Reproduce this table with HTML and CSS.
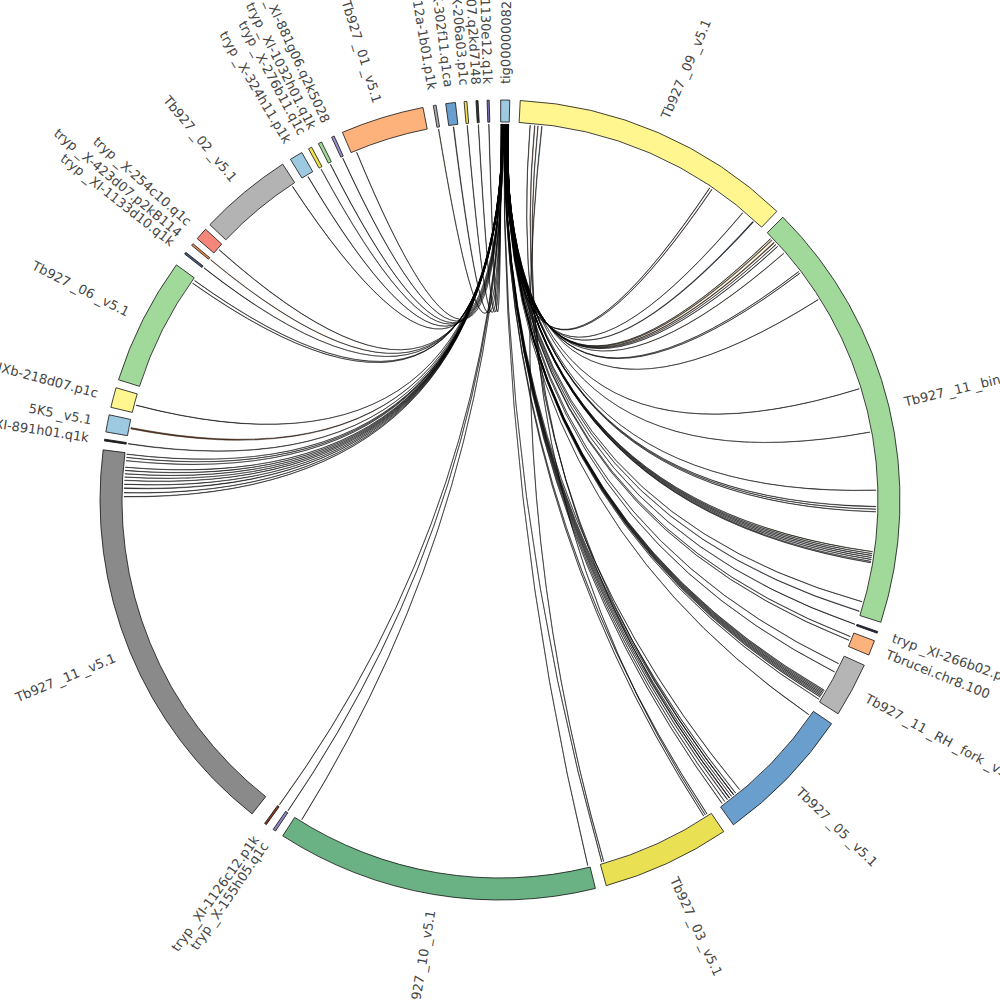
FILE: index.html
```html
<!DOCTYPE html>
<html lang="en">
<head>
<meta charset="utf-8">
<title>Contig link diagram</title>
<link rel="stylesheet" href="styles.css">
</head>
<body>
<svg id="chart" class="chart" xmlns="http://www.w3.org/2000/svg" width="1000" height="1000" viewBox="0 0 1000 1000">
  <g id="links"></g>
  <g id="segments"></g>
  <g id="labels"></g>
</svg>
<script src="script.js"></script>
</body>
</html>
```

FILE: styles.css
```css
html, body {
  margin: 0;
  padding: 0;
  background: #ffffff;
}
.chart {
  display: block;
  width: 1000px;
  height: 1000px;
}
.seg {
  stroke: #111111;
  stroke-width: 0.8;
  stroke-linejoin: miter;
}
.link {
  stroke: #000000;
  stroke-width: 0.45;
  stroke-linejoin: round;
}
.label {
  font-family: "DejaVu Sans", "Liberation Sans", sans-serif;
  font-size: 13px;
  fill: #454545;
}
```

FILE: script.js
```js
(function () {
  var NS = "http://www.w3.org/2000/svg";
  var CX = 500, CY = 500, RO = 400, RI = 378, RC = 376, RL = 416;

  var segments = [
    ["tig00000082", 0.1, 1.4, "#9ecae1"],
    ["Tb927_09_v5.1", 2.9, 43.8, "#fff68f"],
    ["Tb927_11_bin_v5.1", 45.0, 107.8, "#a1d99b"],
    ["tryp_XI-266b02.p1k", 109.2, 109.45, "#2a2a4a"],
    ["Tbrucei.chr8.100", 110.6, 112.8, "#fdb27b"],
    ["Tb927_11_RH_fork_v5.1", 114.4, 122.3, "#b5b5b5"],
    ["Tb927_05_v5.1", 124.0, 144.3, "#6a9fcd"],
    ["Tb927_03_v5.1", 146.0, 164.6, "#e9e053"],
    ["Tb927_10_v5.1", 166.2, 212.9, "#6ab283"],
    ["tryp_X-155h05.q1c", 214.15, 214.55, "#8b84c4"],
    ["tryp_XI-1126c12.p1k", 215.75, 216.05, "#8a3a22"],
    ["Tb927_11_v5.1", 218.3, 277.2, "#8a8a8a"],
    ["tryp_XI-891h01.q1k", 278.5, 278.75, "#222222"],
    ["5K5_v5.1", 279.8, 282.3, "#9ecae1"],
    ["tryp_IXb-218d07.p1c", 283.4, 286.3, "#fff68f"],
    ["Tb927_06_v5.1", 287.5, 306.0, "#a1d99b"],
    ["tryp_XI-1133d10.q1k", 307.95, 308.25, "#4a5a7a"],
    ["tryp_X-423d07.p2kB114", 309.55, 309.85, "#e58a4a"],
    ["tryp_X-254c10.q1c", 310.8, 312.6, "#f4877a"],
    ["Tb927_02_v5.1", 313.5, 327.1, "#b3b3b3"],
    ["tryp_X-324h11.p1k", 328.4, 330.3, "#9ecae1"],
    ["tryp_X-276b11.q1c", 331.4, 331.9, "#f0e050"],
    ["tryp_XI-1032h01.q1k", 333.0, 333.5, "#a1d99b"],
    ["tryp_XI-881g06.q2k5028", 335.1, 335.5, "#9a90d0"],
    ["Tb927_01_v5.1", 336.8, 348.9, "#fdb27b"],
    ["tryp_XI-1012a-1b01.p1k", 350.4, 350.8, "#aaaaaa"],
    ["tryp_X-302f11.q1ca", 352.2, 353.6, "#6a9fcd"],
    ["tryp_X-206a03.p1c", 354.85, 355.25, "#f0e050"],
    ["tryp_X-421d07.q2kd7148", 356.55, 356.85, "#333333"],
    ["tryp_XI-1130e12.q1k", 358.15, 358.45, "#7b6fb0"]
  ];

  // links from the hub contig (tig00000082): [target angle, target width, fill]
  var hubLinks = [
    [33.9, 0.05, "#333333"], [34.3, 0.06, "#8b4a2b"], [40.2, 0.05, "#555555"], [42.3, 0.15, "#2b3a4a"],
    [46.0, 0.05, "#333333"], [46.3, 0.12, "#b8860b"], [46.8, 0.12, "#8b4513"], [47.2, 0.05, "#333333"],
    [47.6, 0.06, "#2e2e2e"], [49.0, 0.05, "#6b5b2a"],
    [52.6, 0.04, "#333333"], [52.9, 0.04, "#333333"], [57.8, 0.04, "#333333"], [72.8, 0.04, "#333333"],
    [79.6, 0.04, "#333333"],
    [88.5, 0.04, "#333333"], [91.0, 0.06, "#3a4a3a"], [91.4, 0.04, "#333333"], [91.8, 0.04, "#333333"],
    [97.9, 0.06, "#6b5b2a"], [98.2, 0.04, "#333333"], [98.5, 0.08, "#333333"], [98.8, 0.04, "#333333"],
    [99.1, 0.06, "#4a4a6a"], [99.4, 0.04, "#333333"], [99.6, 0.04, "#333333"],
    [105.7, 0.04, "#333333"], [107.2, 0.08, "#5b5b7b"],
    [109.3, 0.05, "#333333"], [111.3, 0.04, "#333333"], [111.9, 0.04, "#333333"],
    [115.8, 0.04, "#333333"], [117.2, 0.04, "#333333"], [120.4, 0.05, "#333333"], [120.6, 0.04, "#333333"],
    [120.8, 0.05, "#333333"], [121.0, 0.04, "#333333"], [121.2, 0.05, "#333333"], [121.4, 0.04, "#333333"],
    [121.6, 0.05, "#333333"], [122.0, 0.04, "#333333"],
    [124.8, 0.04, "#333333"], [140.4, 0.04, "#333333"], [141.2, 0.05, "#555555"], [141.6, 0.04, "#333333"],
    [142.0, 0.04, "#333333"], [142.4, 0.04, "#333333"], [142.8, 0.08, "#5b5080"], [143.3, 0.04, "#333333"],
    [143.8, 0.04, "#333333"],
    [146.6, 0.05, "#4a4a2a"], [147.2, 0.04, "#333333"], [164.3, 0.04, "#333333"], [166.5, 0.04, "#2a4a2a"],
    [211.8, 0.05, "#7a3a1a"], [214.3, 0.06, "#5b5080"], [215.9, 0.05, "#7a3a1a"],
    [270.5, 0.06, "#333333"], [271.1, 0.05, "#333333"], [271.8, 0.1, "#333333"], [272.4, 0.04, "#333333"],
    [273.0, 0.05, "#333333"], [273.5, 0.04, "#333333"], [274.0, 0.04, "#333333"],
    [274.5, 0.05, "#333333"], [275.0, 0.04, "#333333"], [276.0, 0.04, "#333333"], [276.5, 0.04, "#333333"],
    [277.0, 0.04, "#333333"],
    [278.6, 0.08, "#333333"], [281.0, 0.2, "#7a4a2a"], [284.6, 0.06, "#333333"],
    [305.2, 0.05, "#333333"], [305.7, 0.05, "#333333"], [308.1, 0.06, "#333333"], [309.7, 0.06, "#b5651d"],
    [311.7, 0.06, "#333333"],
    [326.5, 0.05, "#333333"], [329.3, 0.06, "#333333"], [331.6, 0.06, "#6b6b2a"], [333.2, 0.06, "#333333"],
    [335.3, 0.06, "#333333"],
    [337.6, 0.05, "#555555"], [350.6, 0.06, "#6b6b2a"], [352.9, 0.1, "#4a5a6a"], [355.0, 0.06, "#333333"],
    [356.7, 0.06, "#333333"], [358.3, 0.06, "#333333"]
  ];

  // other links: [source angle, source width, target angle, target width, fill]
  var otherLinks = [
    [4.6, 0.05, 141.6, 0.04, "#333333"],
    [5.3, 0.07, 142.4, 0.05, "#8b4a2b"],
    [5.8, 0.05, 146.9, 0.04, "#333333"],
    [6.4, 0.08, 164.0, 0.05, "#4a5a6a"]
  ];

  function pt(a, r) {
    var t = a * Math.PI / 180;
    return [CX + r * Math.sin(t), CY - r * Math.cos(t)];
  }
  function s(p) { return p[0].toFixed(2) + "," + p[1].toFixed(2); }

  function segPath(a1, a2) {
    var large = (a2 - a1) > 180 ? 1 : 0;
    return "M" + s(pt(a1, RO)) +
      "A" + RO + "," + RO + " 0 " + large + " 1 " + s(pt(a2, RO)) +
      "L" + s(pt(a2, RI)) +
      "A" + RI + "," + RI + " 0 " + large + " 0 " + s(pt(a1, RI)) + "Z";
  }

  function ribbon(s0, s1, t0, t1) {
    return "M" + s(pt(s0, RC)) +
      "A" + RC + "," + RC + " 0 0 1 " + s(pt(s1, RC)) +
      "Q" + CX + "," + CY + " " + s(pt(t0, RC)) +
      "A" + RC + "," + RC + " 0 0 1 " + s(pt(t1, RC)) +
      "Q" + CX + "," + CY + " " + s(pt(s0, RC)) + "Z";
  }

  function el(name, attrs, parent) {
    var e = document.createElementNS(NS, name);
    for (var k in attrs) e.setAttribute(k, attrs[k]);
    parent.appendChild(e);
    return e;
  }

  var gLinks = document.getElementById("links");
  var gSegs = document.getElementById("segments");
  var gLabels = document.getElementById("labels");

  var sorted = hubLinks.slice().sort(function (a, b) { return a[0] - b[0]; });
  var hubStart = 0.18, hubEnd = 1.32, n = sorted.length;
  sorted.forEach(function (l, i) {
    var h = hubEnd - (hubEnd - hubStart) * i / (n - 1);
    var hw = 0.008;
    el("path", {
      "class": "link",
      d: ribbon(h - hw, h, l[0] - l[1] / 2, l[0] + l[1] / 2),
      fill: l[2]
    }, gLinks);
  });
  otherLinks.forEach(function (l) {
    el("path", {
      "class": "link",
      d: ribbon(l[0] - l[1] / 2, l[0] + l[1] / 2, l[2] - l[3] / 2, l[2] + l[3] / 2),
      fill: l[4]
    }, gLinks);
  });

  segments.forEach(function (sg) {
    el("path", { "class": "seg", d: segPath(sg[1], sg[2]), fill: sg[3] }, gSegs);

    var mid = (sg[1] + sg[2]) / 2;
    var p = pt(mid, RL);
    var right = mid < 180;
    var rot = right ? mid - 90 : mid + 90;
    var t = el("text", {
      "class": "label",
      transform: "translate(" + s(p) + ") rotate(" + rot.toFixed(2) + ")",
      "text-anchor": right ? "start" : "end",
      "dominant-baseline": "central"
    }, gLabels);
    var parts = sg[0].split("_");
    parts.forEach(function (part, i) {
      if (i > 0) {
        var u = document.createElementNS(NS, "tspan");
        u.setAttribute("dx", "4");
        u.textContent = "_";
        t.appendChild(u);
      }
      if (part) t.appendChild(document.createTextNode(part));
    });
  });
})();
```
